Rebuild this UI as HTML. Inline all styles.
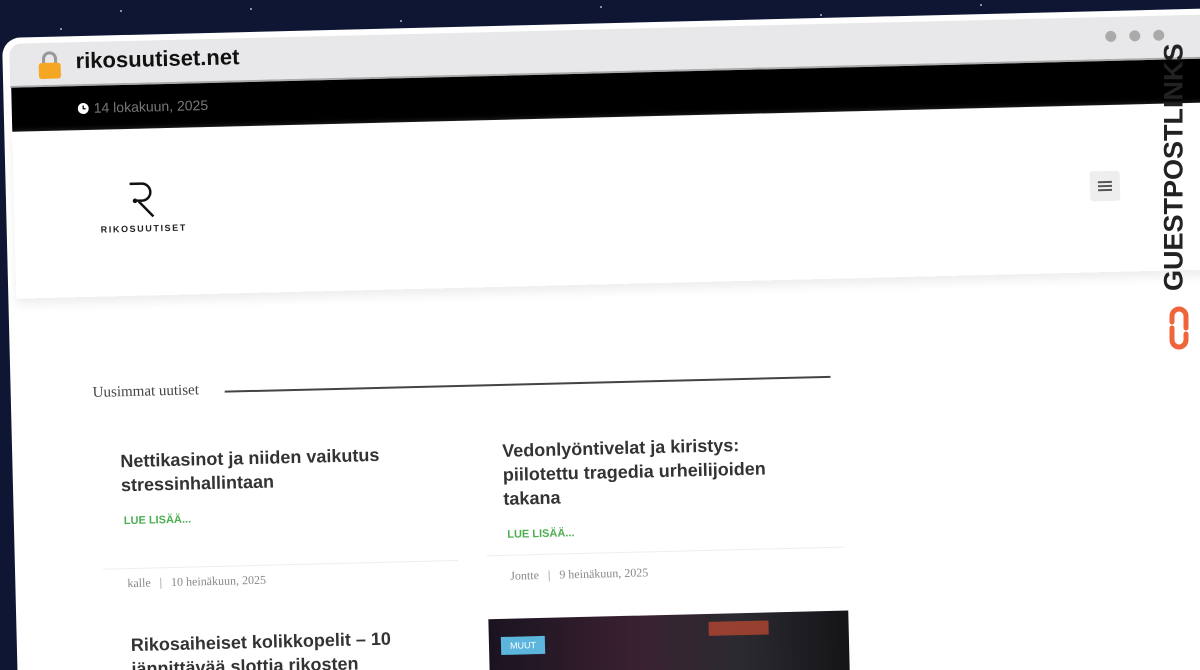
<!DOCTYPE html>
<html><head><style>
html,body{margin:0;width:1200px;height:670px;overflow:hidden}
body{background:#0e1633;position:relative;font-family:"Liberation Sans",sans-serif}
.star{position:absolute;width:2px;height:2px;background:#fff;border-radius:50%;opacity:.7}
.win{position:absolute;left:2px;top:38px;width:1210px;height:700px;transform:rotate(-1.4deg);transform-origin:0 0;background:#fff;border-radius:18px 0 0 0;overflow:hidden}
.bar{height:42px;background:#e8e8ea;margin:6px 0 0 7px;border-radius:12px 0 0 0;position:relative;border-bottom:2px solid #aaa}
.url{position:absolute;left:66px;top:6px;font-size:22px;font-weight:bold;color:#111}
.lock{position:absolute;left:28px;top:8px}
.dots{position:absolute;right:48px;top:12px}
.dots span{display:inline-block;width:11px;height:11px;border-radius:50%;background:#aaa;margin-left:13px}
.top{height:44px;background:#000;margin-left:8px;color:#777;font-size:14px;position:relative}
.top span{position:absolute;left:82px;top:14px}
.hdr{height:167px;margin-left:8px;box-shadow:0 6px 10px #eee;position:relative}
.menu{position:absolute;left:1076px;top:66px;width:30px;height:30px;background:#eee;border-radius:3px}
.menu i{position:absolute;left:8px;width:14px;height:2px;background:#555}
h2{margin:0;font-size:18px;color:#333;font-weight:bold;line-height:24px;position:absolute}
.more{position:absolute;font-size:11px;color:#4caf50;font-weight:bold}
.meta{position:absolute;font-size:12px;color:#888;font-family:"Liberation Serif",serif}
.gp{position:absolute;left:1152px;top:58px;width:50px;height:300px}
</style></head><body>
<div class="star" style="left:120px;top:10px"></div><div class="star" style="left:250px;top:8px"></div><div class="star" style="left:400px;top:20px"></div><div class="star" style="left:600px;top:6px"></div><div class="star" style="left:820px;top:14px"></div><div class="star" style="left:980px;top:4px"></div><div class="star" style="left:1150px;top:16px"></div><div class="star" style="left:60px;top:28px"></div>
<div class="win">
 <div class="bar">
  <svg class="lock" width="24" height="28" viewBox="0 0 24 28"><path d="M6 13V8a6 6 0 0 1 12 0v5" fill="none" stroke="#999" stroke-width="3"/><rect x="1" y="12" width="22" height="16" rx="3" fill="#f5a623"/></svg>
  <div class="url">rikosuutiset.net</div>
  <div class="dots"><span></span><span></span><span></span></div>
 </div>
 <div class="top"><svg style="position:absolute;left:66px;top:17px" width="11" height="11" viewBox="0 0 11 11"><circle cx="5.5" cy="5.5" r="5.5" fill="#fff"/><path d="M5.5 2.5v3.2h2.3" stroke="#000" stroke-width="1.3" fill="none"/></svg><span>14 lokakuun, 2025</span></div>
 <div class="hdr">
  <svg style="position:absolute;left:112px;top:52px" width="36" height="38" viewBox="0 0 36 38"><path d="M4 3h12a8.5 8.5 0 0 1 0 17h-4l15 16" fill="none" stroke="#111" stroke-width="2.5"/><circle cx="9" cy="20" r="2.3" fill="#111"/></svg>
  <div style="position:absolute;left:86px;top:95px;font-size:9px;font-weight:bold;letter-spacing:1.6px;color:#222">RIKOSUUTISET</div>
  <div class="menu"><i style="top:10px"></i><i style="top:14px"></i><i style="top:18px"></i></div>
 </div>
 <div style="position:absolute;left:82px;top:349px;font-family:'Liberation Serif',serif;font-size:15px;color:#444">Uusimmat uutiset</div>
 <div style="position:absolute;left:214px;top:358px;width:606px;height:2px;background:#444"></div>
 <h2 style="left:108px;top:414px;width:290px">Nettikasinot ja niiden vaikutus stressinhallintaan</h2>
 <div class="more" style="left:110px;top:480px">LUE LISÄÄ...</div>
 <div style="position:absolute;left:88px;top:533px;width:355px;height:1px;background:#eee"></div>
 <div class="meta" style="left:112px;top:541px">kalle &nbsp; | &nbsp; 10 heinäkuun, 2025</div>
 <h2 style="left:490px;top:413px;width:300px">Vedonlyöntivelat ja kiristys: piilotettu tragedia urheilijoiden takana</h2>
 <div class="more" style="left:493px;top:503px">LUE LISÄÄ...</div>
 <div style="position:absolute;left:472px;top:529px;width:357px;height:1px;background:#eee"></div>
 <div class="meta" style="left:495px;top:543px">Jontte &nbsp; | &nbsp; 9 heinäkuun, 2025</div>
 <h2 style="left:114px;top:598px;width:300px">Rikosaiheiset kolikkopelit – 10 jännittävää slottia rikosten</h2>
 <div style="position:absolute;left:472px;top:593px;width:360px;height:80px;background:linear-gradient(90deg,#1a1420,#3a2030 40%,#2a2a30 70%,#151518)">
  <div style="position:absolute;left:12px;top:18px;background:#5bb5dc;color:#fff;font-size:9px;padding:4px 9px">MUUT</div>
  <div style="position:absolute;left:220px;top:8px;width:60px;height:14px;background:#c84a30;opacity:.7"></div>
 </div>
</div>
<div class="gp">
 <div style="position:absolute;left:-118px;top:110px;width:280px;transform:rotate(-90deg);font-size:27px;font-weight:900;color:#222;text-align:right">GUESTPOSTLINKS</div>
 <svg style="position:absolute;left:14px;top:248px" width="26" height="44" viewBox="0 0 26 44"><path d="M20 22V10a7 7 0 0 0-14 0v6M6 22v12a7 7 0 0 0 14 0v-6" fill="none" stroke="#f0643c" stroke-width="5" stroke-linecap="round"/></svg>
</div>
</body></html>
